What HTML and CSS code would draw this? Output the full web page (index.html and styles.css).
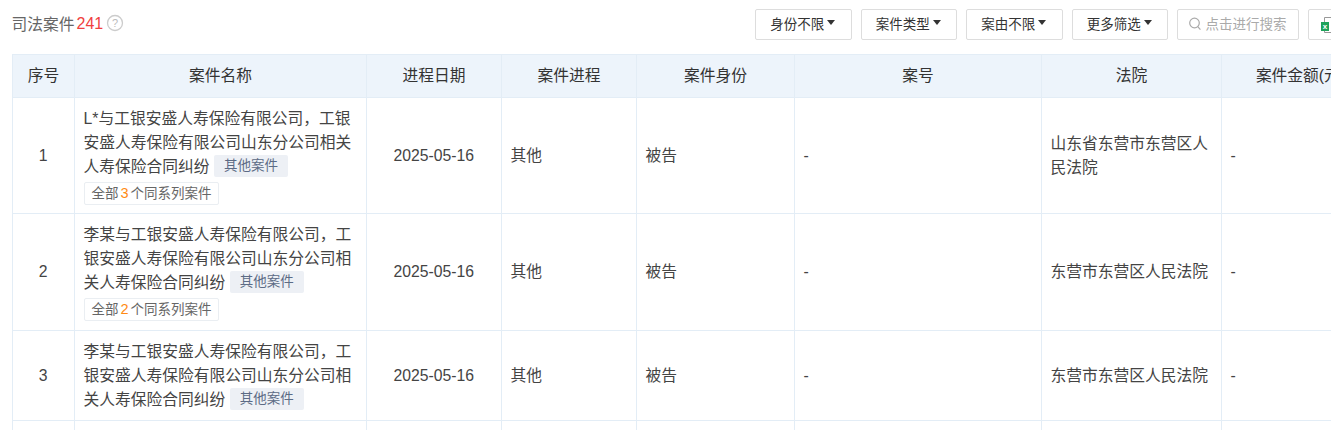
FILE: index.html
```html
<!DOCTYPE html>
<html lang="en">
<head>
    <meta charset="UTF-8">
    <title>司法案件</title>
    <link rel="stylesheet" href="styles.css">
</head>
<body>
    <div class="toolbar">
        <div class="title">
            <span>司法案件</span><span class="count">241</span>
            <svg class="help" width="18" height="18" viewBox="0 0 18 18"><circle cx="9" cy="9" r="7.5" fill="none" stroke="#ccc" stroke-width="1.3"/><text x="9" y="13" text-anchor="middle" font-size="11" fill="#bbb" font-family="Liberation Sans">?</text></svg>
        </div>
        <div class="filters">
            <button class="filter">身份不限<i class="caret"></i></button>
            <button class="filter">案件类型<i class="caret"></i></button>
            <button class="filter">案由不限<i class="caret"></i></button>
            <button class="filter">更多筛选<i class="caret"></i></button>
            <div class="search">
                <svg width="14" height="14" viewBox="0 0 14 14"><circle cx="6.5" cy="6" r="4.8" fill="none" stroke="#aaa" stroke-width="1.2"/><path d="M9.8 9.6L12.4 12.6" stroke="#aaa" stroke-width="1.2"/></svg>
                <span>点击进行搜索</span>
            </div>
            <div class="export">
                <svg width="18" height="18" viewBox="0 0 18 18"><path d="M3.5 1.5h9v15h-9z" fill="#fff" stroke="#999"/><rect x="0" y="6" width="8" height="9" fill="#1fa35c"/><text x="4" y="13" text-anchor="middle" font-size="8" font-weight="bold" fill="#fff" font-family="Liberation Sans">x</text></svg>
            </div>
        </div>
    </div>

    <table class="cases">
        <colgroup>
            <col class="c-no"><col class="c-name"><col class="c-date"><col class="c-stage"><col class="c-role"><col class="c-num"><col class="c-court"><col class="c-amount">
        </colgroup>
        <thead>
            <tr>
                <th>序号</th><th>案件名称</th><th>进程日期</th><th>案件进程</th><th>案件身份</th><th>案号</th><th>法院</th><th>案件金额(元)</th>
            </tr>
        </thead>
        <tbody>
            <tr class="row-1">
                <td class="center">1</td>
                <td>L*与工银安盛人寿保险有限公司，工银安盛人寿保险有限公司山东分公司相关人寿保险合同纠纷<span class="tag">其他案件</span>
                    <div><span class="series">全部<b>3</b>个同系列案件</span></div>
                </td>
                <td class="center">2025-05-16</td>
                <td>其他</td>
                <td>被告</td>
                <td>-</td>
                <td>山东省东营市东营区人民法院</td>
                <td>-</td>
            </tr>
            <tr class="row-2">
                <td class="center">2</td>
                <td>李某与工银安盛人寿保险有限公司，工银安盛人寿保险有限公司山东分公司相关人寿保险合同纠纷<span class="tag">其他案件</span>
                    <div><span class="series">全部<b>2</b>个同系列案件</span></div>
                </td>
                <td class="center">2025-05-16</td>
                <td>其他</td>
                <td>被告</td>
                <td>-</td>
                <td>东营市东营区人民法院</td>
                <td>-</td>
            </tr>
            <tr class="row-3">
                <td class="center">3</td>
                <td>李某与工银安盛人寿保险有限公司，工银安盛人寿保险有限公司山东分公司相关人寿保险合同纠纷<span class="tag">其他案件</span></td>
                <td class="center">2025-05-16</td>
                <td>其他</td>
                <td>被告</td>
                <td>-</td>
                <td>东营市东营区人民法院</td>
                <td>-</td>
            </tr>
            <tr class="row-4">
                <td></td><td></td><td></td><td></td><td></td><td></td><td></td><td></td>
            </tr>
        </tbody>
    </table>
</body>
</html>
```

FILE: styles.css
```css
html, body {
    margin: 0;
    padding: 0;
    height: 430px;
    overflow: hidden;
    background-color: #fff;
}

body {
    font-family: "Liberation Sans", "Noto Sans CJK SC", sans-serif;
    color: #444;
    font-size: 15.75px;
    width: 1331px;
}

.toolbar {
    display: flex;
    justify-content: space-between;
    align-items: center;
    height: 31px;
    padding: 9px 0 14px 11.5px;
}

.title {
    display: flex;
    align-items: center;
    color: #666;
    margin-top: -3px;
}

.count {
    color: #f04040;
    font-size: 16px;
    margin: 1px 0 0 2px;
}

.help {
    margin-left: 3px;
}

.filters {
    display: flex;
    gap: 9px;
    width: 576px;
    flex: none;
}

.filter, .search, .export {
    box-sizing: border-box;
    height: 31px;
    border: 1px solid #ddd;
    border-radius: 2px;
    background-color: #fff;
    font-family: inherit;
    font-size: 13.5px;
    color: #333;
    display: flex;
    align-items: center;
    justify-content: center;
    padding: 0 0 4px;
    flex: none;
}

.filter {
    width: 96.5px;
    padding-right: 1px;
}

.caret {
    width: 0;
    height: 0;
    border-left: 4px solid transparent;
    border-right: 4px solid transparent;
    border-top: 5px solid #333;
    margin-left: 3px;
}

.search {
    width: 122px;
    color: #aaa;
    gap: 4px;
    padding-right: 2px;
}

.search svg {
    margin-top: 2px;
}

.export {
    width: 40px;
    justify-content: flex-start;
    padding: 0 0 0 11.5px;
}

.cases {
    border-collapse: collapse;
    table-layout: fixed;
    width: 1367px;
    margin-left: 12px;
}

.c-no { width: 62px; }
.c-name { width: 292px; }
.c-date { width: 135px; }
.c-stage { width: 135px; }
.c-role { width: 158px; }
.c-num { width: 247px; }
.c-court { width: 180px; }
.c-amount { width: 158px; }

th, td {
    border: 1px solid #e3edf6;
    padding: 8px 9px 8px 8.5px;
    line-height: 24px;
    vertical-align: middle;
    text-align: left;
    font-weight: normal;
    word-break: break-all;
}

th {
    background-color: #edf4fb;
    color: #333;
    text-align: center;
    padding: 0 4px;
    height: 42px;
    white-space: nowrap;
}

.center {
    text-align: center;
}

.row-1 { height: 116px; }
.row-2 { height: 117px; }
.row-3 { height: 90px; }
.row-4 { height: 24px; }

.tag {
    display: inline-block;
    background-color: #edf0f5;
    color: #5c6b85;
    font-size: 13.5px;
    line-height: 22px;
    padding: 0 10px;
    border-radius: 2px;
    margin-left: 4.5px;
    vertical-align: 2px;
}

.series {
    display: inline-block;
    margin-top: 3px;
    border: 1px solid #eaeef2;
    border-radius: 2px;
    color: #666;
    font-size: 13.5px;
    line-height: 21px;
    padding: 0 6px 0 7px;
}

.series b {
    color: #ff8a14;
    font-size: 14.5px;
    font-weight: normal;
    margin: 0 2px;
}
```
